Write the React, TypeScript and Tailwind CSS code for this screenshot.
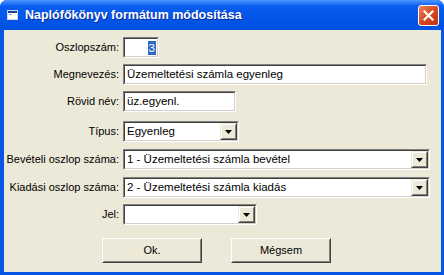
import React from "react";

const font = "font-['Liberation_Sans',Arial,sans-serif]";

function Sunken({ className, children }: { className?: string; children?: React.ReactNode }) {
  return (
    <div className={`border border-t-[#808080] border-l-[#808080] border-b-white border-r-white ${className ?? ""}`}>
      <div className="h-full border border-t-[#404040] border-l-[#404040] border-b-[#d4d0c8] border-r-[#d4d0c8] bg-white flex items-center">
        {children}
      </div>
    </div>
  );
}

function Arrow() {
  return (
    <div className="h-full w-[17px] shrink-0 border border-t-[#ece9d8] border-l-[#ece9d8] border-b-[#404040] border-r-[#404040]">
      <div className="h-full border border-t-white border-l-white border-b-[#808080] border-r-[#808080] bg-[#ece9d8] flex items-center justify-center">
        <svg width="7" height="4" viewBox="0 0 7 4">
          <path d="M0 0h7L3.5 4z" fill="#000" />
        </svg>
      </div>
    </div>
  );
}

function Combo({ w, value }: { w: string; value: string }) {
  return (
    <Sunken className={`${w} h-[21px]`}>
      <span className="flex-1 pl-[2px] text-[11.5px] text-black whitespace-nowrap overflow-hidden">{value}</span>
      <Arrow />
    </Sunken>
  );
}

function Row({ label, mt, children }: { label: string; mt: string; children: React.ReactNode }) {
  return (
    <div className={`flex items-center ${mt}`}>
      <span className="w-[116px] text-right text-[11px] text-black pr-[1px] whitespace-nowrap">{label}</span>
      <div className="ml-[3px]">{children}</div>
    </div>
  );
}

function Button({ label }: { label: string }) {
  return (
    <div className="w-[100px] h-[25px] border border-t-white border-l-white border-b-[#404040] border-r-[#404040]">
      <div className="h-full border border-t-[#ece9d8] border-l-[#ece9d8] border-b-[#808080] border-r-[#808080] flex items-center justify-center text-[11px] text-black">
        {label}
      </div>
    </div>
  );
}

export default function App() {
  return (
    <div className={`w-[444px] h-[275px] bg-white ${font}`}>
      <div className="w-[444px] h-[275px] rounded-t-[7px] bg-[#0855e6] flex flex-col overflow-hidden">
        <div className="h-[30px] shrink-0 flex items-center bg-linear-to-b from-[#4a97ff] via-[#0a5cf0] via-20% to-[#0050e0] pl-[7px] pr-[5px]">
          <svg width="11" height="10" viewBox="0 0 11 10" className="shrink-0">
            <rect x="0.5" y="0.5" width="10" height="9" fill="#fff" stroke="#c8d8f0" />
            <rect x="1" y="1" width="9" height="2" fill="#1c3f95" />
            <rect x="2" y="4" width="3" height="1" fill="#7d9bd6" />
          </svg>
          <span className="ml-[7px] text-white font-bold text-[12.5px] [text-shadow:1px_1px_0_#0a2a9a]">
            Naplófőkönyv formátum módosítása
          </span>
          <div className="ml-auto w-[21px] h-[21px] rounded-[3px] border border-white bg-linear-to-br from-[#e8825a] via-[#d9481f] to-[#c0300f] flex items-center justify-center">
            <svg width="11" height="11" viewBox="0 0 11 11">
              <path d="M1.5 1.5l8 8M9.5 1.5l-8 8" stroke="#fff" strokeWidth="2.2" strokeLinecap="square" />
            </svg>
          </div>
        </div>
        <div className="flex-1 mx-[4px] mb-[3px] mr-[3px] bg-[#ece9d8] flex flex-col">
          <Row label="Oszlopszám:" mt="mt-[7px]">
            <Sunken className="w-[36px] h-[21px]">
              <div className="flex-1 flex justify-end pr-[1px]">
                <span className="bg-[#316ac5] text-white text-[11.5px] px-[1px] leading-[14px]">3</span>
              </div>
            </Sunken>
          </Row>
          <Row label="Megnevezés:" mt="mt-[6px]">
            <Sunken className="w-[304px] h-[21px]">
              <span className="pl-[2px] text-[11.5px] text-black whitespace-nowrap">Üzemeltetési számla egyenleg</span>
            </Sunken>
          </Row>
          <Row label="Rövid név:" mt="mt-[6px]">
            <Sunken className="w-[113px] h-[21px]">
              <span className="pl-[2px] text-[11.5px] text-black">üz.egyenl.</span>
            </Sunken>
          </Row>
          <Row label="Típus:" mt="mt-[9px]">
            <Combo w="w-[116px]" value="Egyenleg" />
          </Row>
          <Row label="Bevételi oszlop száma:" mt="mt-[7px]">
            <Combo w="w-[307px]" value="1 - Üzemeltetési számla bevétel" />
          </Row>
          <Row label="Kiadási oszlop száma:" mt="mt-[7px]">
            <Combo w="w-[307px]" value="2 - Üzemeltetési számla kiadás" />
          </Row>
          <Row label="Jel:" mt="mt-[6px]">
            <Combo w="w-[134px]" value="" />
          </Row>
          <div className="flex mt-[13px] pl-[98px] gap-[29px]">
            <Button label="Ok." />
            <Button label="Mégsem" />
          </div>
        </div>
      </div>
    </div>
  );
}
